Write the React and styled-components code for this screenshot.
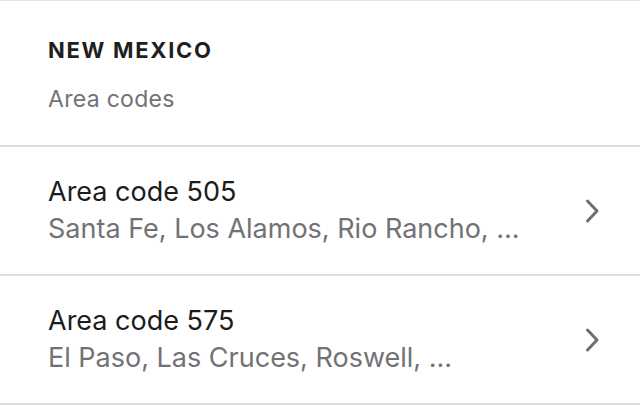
import React from "react";
import styled, { createGlobalStyle } from "styled-components";

const Global = createGlobalStyle`
  html, body { margin: 0; padding: 0; background: #fff; }
  body { font-family: Inter, "Noto Sans", sans-serif; -webkit-font-smoothing: antialiased; }
`;

const Page = styled.div`
  width: 640px;
  height: 406px;
  background: #fff;
  border-top: 1px solid #e3e3e3;
  box-sizing: border-box;
  overflow: hidden;
`;

const Header = styled.div`
  height: 146px;
  box-sizing: border-box;
  padding: 35px 48px 0;
  border-bottom: 2px solid #dedede;
`;

const Title = styled.div`
  font-size: 22px;
  font-weight: 700;
  letter-spacing: 1.7px;
  color: #1f1f1f;
  line-height: 28px;
`;

const Sub = styled.div`
  margin-top: 21px;
  font-size: 23px;
  letter-spacing: 0.3px;
  color: #727276;
  line-height: 28px;
`;

const Row = styled.div`
  height: 129px;
  box-sizing: border-box;
  display: flex;
  align-items: center;
  padding: 0 40px 0 48px;
  border-bottom: 2px solid #dedede;
`;

const RowText = styled.div`
  flex: 1;
  display: flex;
  flex-direction: column;
  gap: 5px;
`;

const RowTitle = styled.div`
  font-size: 27px;
  color: #1c1c1c;
  line-height: 32px;
`;

const RowSub = styled.div`
  font-size: 27px;
  color: #727276;
  line-height: 32px;
`;

const Chevron = () => (
  <svg width="16" height="26" viewBox="0 0 16 26">
    <path d="M3.5 3 L13 13 L3.5 23" fill="none" stroke="#6e6e72" strokeWidth="3" strokeLinecap="round" strokeLinejoin="round" />
  </svg>
);

const items = [
  { code: "505", cities: "Santa Fe, Los Alamos, Rio Rancho, ..." },
  { code: "575", cities: "El Paso, Las Cruces, Roswell, ..." },
];

export default function App() {
  return (
    <Page>
      <Global />
      <Header>
        <Title>NEW MEXICO</Title>
        <Sub>Area codes</Sub>
      </Header>
      {items.map((it) => (
        <Row key={it.code}>
          <RowText>
            <RowTitle>Area code {it.code}</RowTitle>
            <RowSub>{it.cities}</RowSub>
          </RowText>
          <Chevron />
        </Row>
      ))}
    </Page>
  );
}
